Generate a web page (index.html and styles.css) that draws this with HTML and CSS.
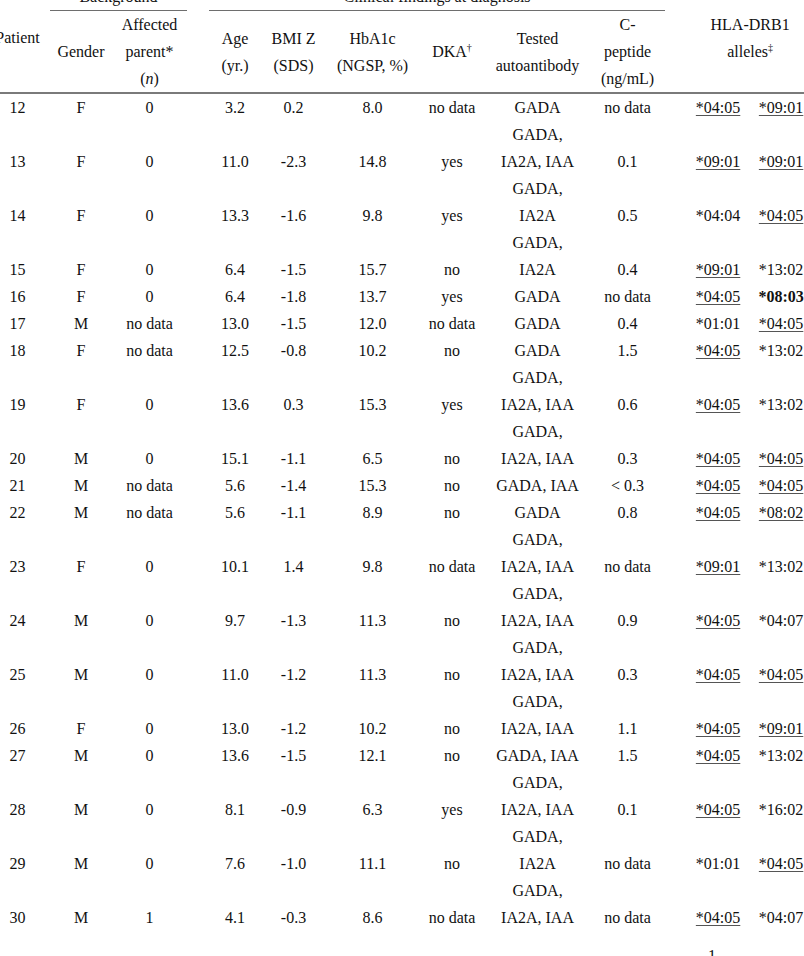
FILE: index.html
```html
<!DOCTYPE html>
<html lang="en">
<head>
<meta charset="utf-8">
<title>Patient table</title>
<link rel="stylesheet" href="styles.css">
</head>
<body>
<div class="page">
  <table class="data">
    <colgroup>
      <col class="c-pat"><col class="c-gen"><col class="c-aff"><col class="c-gap">
      <col class="c-age"><col class="c-bmi"><col class="c-hba"><col class="c-dka">
      <col class="c-ab"><col class="c-cp"><col class="c-gap"><col class="c-hla1"><col class="c-hla2">
    </colgroup>
    <thead>
      <tr>
        <th rowspan="2" class="mid">Patient</th>
        <th colspan="2" class="group">Background</th>
        <th rowspan="2"></th>
        <th colspan="6" class="group">Clinical findings at diagnosis</th>
        <th rowspan="2"></th>
        <th colspan="2" rowspan="2" class="mid">HLA-DRB1<br>alleles<sup>‡</sup></th>
      </tr>
      <tr>
        <th>Gender</th>
        <th>Affected<br>parent*<br>(<i>n</i>)</th>
        <th>Age<br>(yr.)</th>
        <th>BMI Z<br>(SDS)</th>
        <th>HbA1c<br>(NGSP, %)</th>
        <th>DKA<sup>†</sup></th>
        <th>Tested<br>autoantibody</th>
        <th>C-<br>peptide<br>(ng/mL)</th>
      </tr>
    </thead>
    <tbody>
      <tr><td>12</td><td>F</td><td>0</td><td></td><td>3.2</td><td>0.2</td><td>8.0</td><td>no data</td><td>GADA</td><td>no data</td><td></td><td><u>*04:05</u></td><td><u>*09:01</u></td></tr>
      <tr><td>13</td><td>F</td><td>0</td><td></td><td>11.0</td><td>-2.3</td><td>14.8</td><td>yes</td><td>GADA,<br>IA2A, IAA</td><td>0.1</td><td></td><td><u>*09:01</u></td><td><u>*09:01</u></td></tr>
      <tr><td>14</td><td>F</td><td>0</td><td></td><td>13.3</td><td>-1.6</td><td>9.8</td><td>yes</td><td>GADA,<br>IA2A</td><td>0.5</td><td></td><td>*04:04</td><td><u>*04:05</u></td></tr>
      <tr><td>15</td><td>F</td><td>0</td><td></td><td>6.4</td><td>-1.5</td><td>15.7</td><td>no</td><td>GADA,<br>IA2A</td><td>0.4</td><td></td><td><u>*09:01</u></td><td>*13:02</td></tr>
      <tr><td>16</td><td>F</td><td>0</td><td></td><td>6.4</td><td>-1.8</td><td>13.7</td><td>yes</td><td>GADA</td><td>no data</td><td></td><td><u>*04:05</u></td><td><b>*08:03</b></td></tr>
      <tr><td>17</td><td>M</td><td>no data</td><td></td><td>13.0</td><td>-1.5</td><td>12.0</td><td>no data</td><td>GADA</td><td>0.4</td><td></td><td>*01:01</td><td><u>*04:05</u></td></tr>
      <tr><td>18</td><td>F</td><td>no data</td><td></td><td>12.5</td><td>-0.8</td><td>10.2</td><td>no</td><td>GADA</td><td>1.5</td><td></td><td><u>*04:05</u></td><td>*13:02</td></tr>
      <tr><td>19</td><td>F</td><td>0</td><td></td><td>13.6</td><td>0.3</td><td>15.3</td><td>yes</td><td>GADA,<br>IA2A, IAA</td><td>0.6</td><td></td><td><u>*04:05</u></td><td>*13:02</td></tr>
      <tr><td>20</td><td>M</td><td>0</td><td></td><td>15.1</td><td>-1.1</td><td>6.5</td><td>no</td><td>GADA,<br>IA2A, IAA</td><td>0.3</td><td></td><td><u>*04:05</u></td><td><u>*04:05</u></td></tr>
      <tr><td>21</td><td>M</td><td>no data</td><td></td><td>5.6</td><td>-1.4</td><td>15.3</td><td>no</td><td>GADA, IAA</td><td>&lt; 0.3</td><td></td><td><u>*04:05</u></td><td><u>*04:05</u></td></tr>
      <tr><td>22</td><td>M</td><td>no data</td><td></td><td>5.6</td><td>-1.1</td><td>8.9</td><td>no</td><td>GADA</td><td>0.8</td><td></td><td><u>*04:05</u></td><td><u>*08:02</u></td></tr>
      <tr><td>23</td><td>F</td><td>0</td><td></td><td>10.1</td><td>1.4</td><td>9.8</td><td>no data</td><td>GADA,<br>IA2A, IAA</td><td>no data</td><td></td><td><u>*09:01</u></td><td>*13:02</td></tr>
      <tr><td>24</td><td>M</td><td>0</td><td></td><td>9.7</td><td>-1.3</td><td>11.3</td><td>no</td><td>GADA,<br>IA2A, IAA</td><td>0.9</td><td></td><td><u>*04:05</u></td><td>*04:07</td></tr>
      <tr><td>25</td><td>M</td><td>0</td><td></td><td>11.0</td><td>-1.2</td><td>11.3</td><td>no</td><td>GADA,<br>IA2A, IAA</td><td>0.3</td><td></td><td><u>*04:05</u></td><td><u>*04:05</u></td></tr>
      <tr><td>26</td><td>F</td><td>0</td><td></td><td>13.0</td><td>-1.2</td><td>10.2</td><td>no</td><td>GADA,<br>IA2A, IAA</td><td>1.1</td><td></td><td><u>*04:05</u></td><td><u>*09:01</u></td></tr>
      <tr><td>27</td><td>M</td><td>0</td><td></td><td>13.6</td><td>-1.5</td><td>12.1</td><td>no</td><td>GADA, IAA</td><td>1.5</td><td></td><td><u>*04:05</u></td><td>*13:02</td></tr>
      <tr><td>28</td><td>M</td><td>0</td><td></td><td>8.1</td><td>-0.9</td><td>6.3</td><td>yes</td><td>GADA,<br>IA2A, IAA</td><td>0.1</td><td></td><td><u>*04:05</u></td><td>*16:02</td></tr>
      <tr><td>29</td><td>M</td><td>0</td><td></td><td>7.6</td><td>-1.0</td><td>11.1</td><td>no</td><td>GADA,<br>IA2A</td><td>no data</td><td></td><td>*01:01</td><td><u>*04:05</u></td></tr>
      <tr><td>30</td><td>M</td><td>1</td><td></td><td>4.1</td><td>-0.3</td><td>8.6</td><td>no data</td><td>GADA,<br>IA2A, IAA</td><td>no data</td><td></td><td><u>*04:05</u></td><td>*04:07</td></tr>
    </tbody>
  </table>
  <div class="pagenum">1</div>
</div>
</body>
</html>
```

FILE: styles.css
```css
html, body {
  margin: 0;
  padding: 0;
  background: #ffffff;
}

.page {
  width: 804px;
  height: 956px;
  overflow: hidden;
  font-family: "Liberation Serif", "Times New Roman", serif;
  font-size: 16px;
  line-height: 27px;
  color: #111111;
}

.data {
  border-collapse: separate;
  border-spacing: 0;
  table-layout: fixed;
  width: 828px;
  margin-top: -17px;
  margin-left: -15px;
}

.c-pat { width: 65px; }
.c-gen { width: 62px; }
.c-aff { width: 75px; }
.c-gap { width: 22px; }
.c-age { width: 52px; }
.c-bmi { width: 65px; }
.c-hba { width: 93px; }
.c-dka { width: 66px; }
.c-ab { width: 105px; }
.c-cp { width: 75px; }
.c-hla1 { width: 62px; }
.c-hla2 { width: 64px; }

.data th,
.data td {
  padding: 0;
  text-align: center;
  white-space: nowrap;
  font-weight: normal;
}

.data th {
  vertical-align: middle;
}

.data td {
  vertical-align: bottom;
}

.data th.group {
  border-bottom: 1px solid #6e6e6e;
}

.data tbody tr:first-child td {
  border-top: 2px solid #7a7a7a;
}

.data sup {
  font-size: 10px;
  line-height: 0;
  vertical-align: 6px;
}

.data u {
  text-decoration: underline;
  text-decoration-color: #555555;
  text-decoration-thickness: 1px;
  text-underline-offset: 2px;
}

.data b {
  font-weight: bold;
}

.pagenum {
  margin-top: 11px;
  text-align: right;
  padding-right: 88px;
}
```
